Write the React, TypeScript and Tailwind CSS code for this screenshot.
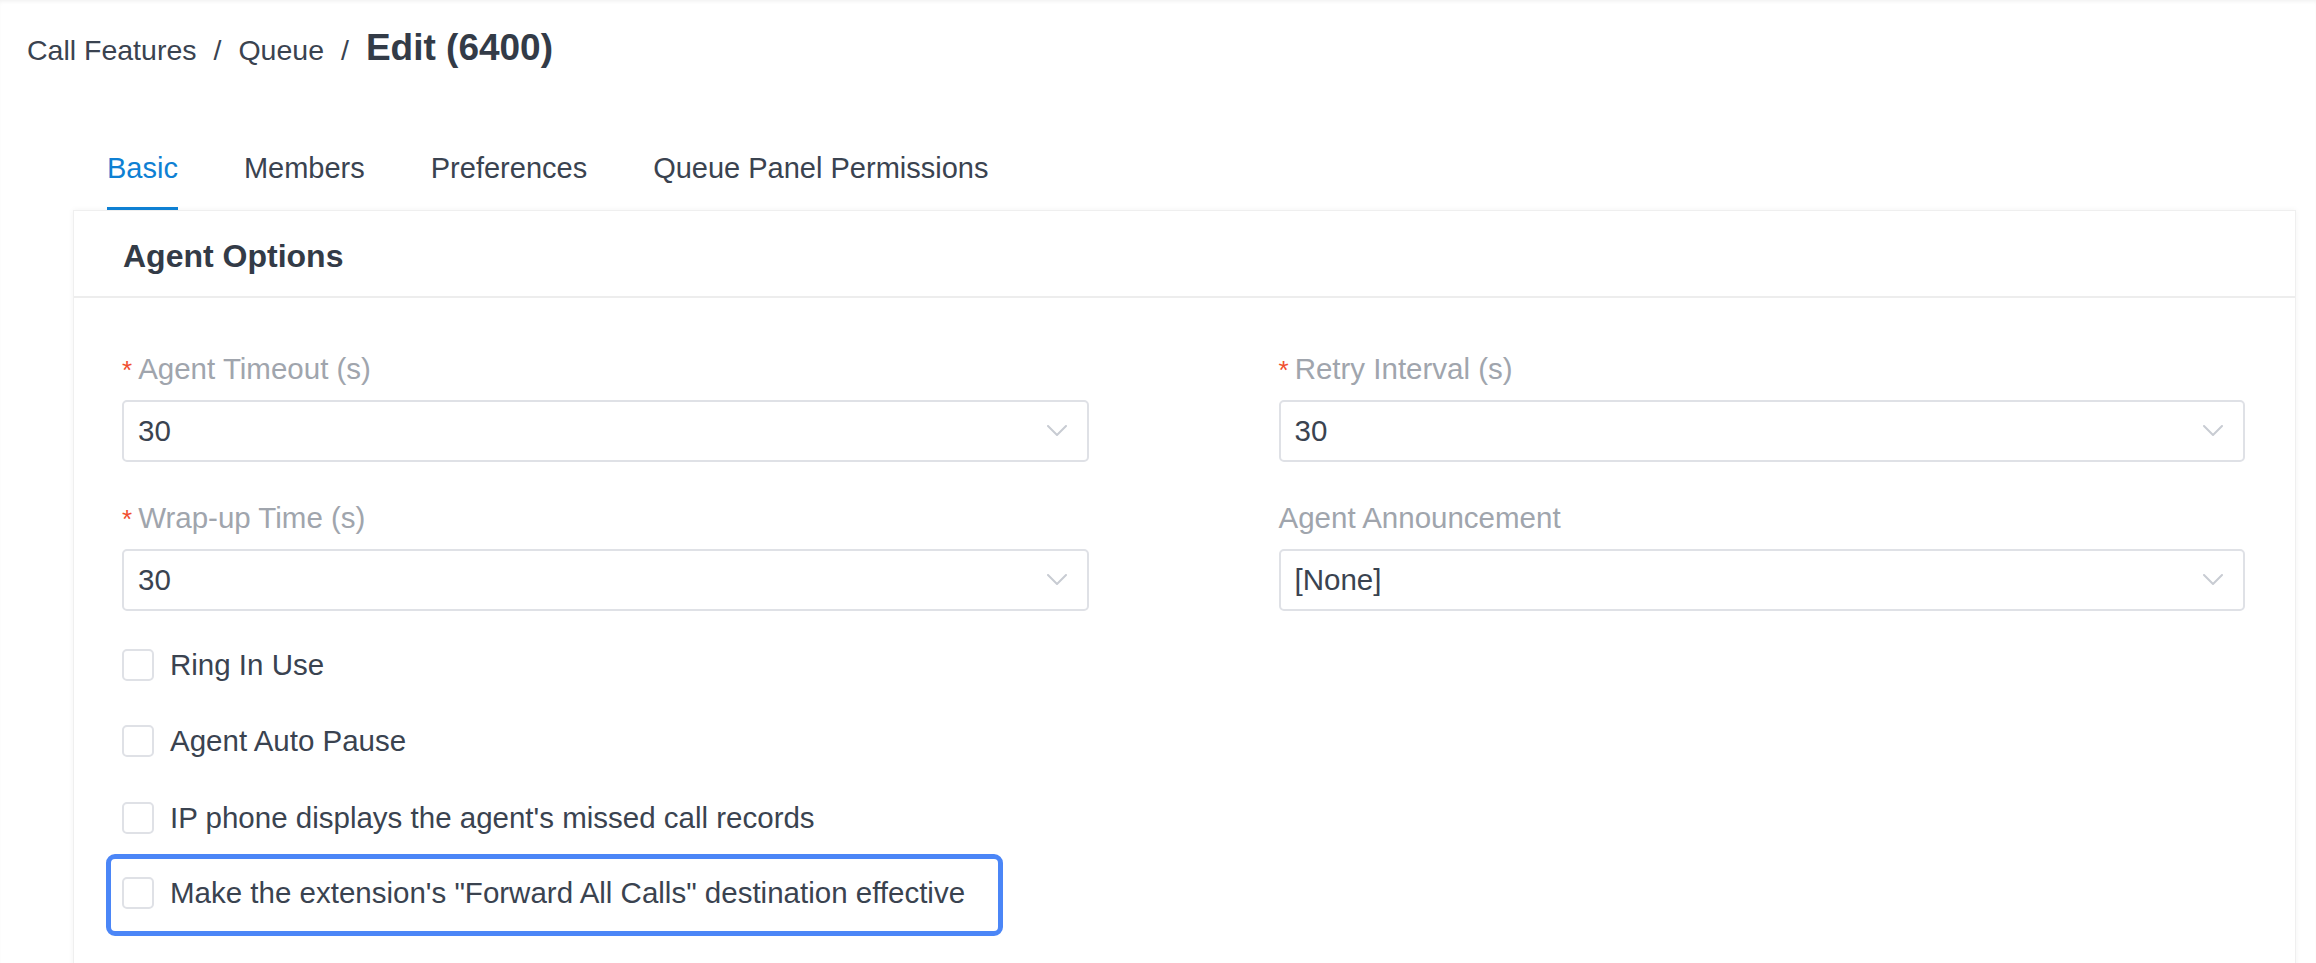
import React from 'react';

const tabs = ['Basic', 'Members', 'Preferences', 'Queue Panel Permissions'];

function Chevron() {
  return (
    <svg width="20" height="12" viewBox="0 0 20 12" fill="none">
      <polyline points="1,1 10,10 19,1" stroke="#c8ccd3" strokeWidth="2" strokeLinecap="round" strokeLinejoin="round" />
    </svg>
  );
}

function SelectField({ label, value, required }: { label: string; value: string; required?: boolean }) {
  return (
    <div className="flex flex-col">
      <div className="flex items-baseline leading-none text-[29.5px] text-[#a0a5ad]">
        {required && <span className="text-[#f04e2f] mr-[6px] text-[26px]">*</span>}
        <span>{label}</span>
      </div>
      <div className="mt-[16.5px] h-[62px] border-2 border-[#dfe1e6] rounded-[5px] flex items-center justify-between pl-[14px] pr-[20px] bg-white">
        <span className="leading-none text-[29.5px] text-[#3a4350]">{value}</span>
        <Chevron />
      </div>
    </div>
  );
}

function CheckRow({ label }: { label: string }) {
  return (
    <div className="flex items-center">
      <div className="w-[32px] h-[32px] border-2 border-[#dfe1e6] rounded-[5px] bg-white" />
      <span className="ml-[16px] leading-none text-[29.5px] text-[#3a4350]">{label}</span>
    </div>
  );
}

export default function App() {
  return (
    <div className="min-h-screen bg-white font-['Liberation_Sans',Arial,sans-serif] shadow-[inset_0_3px_4px_-2px_rgba(0,0,0,0.07)]">
      {/* breadcrumb */}
      <div className="pt-[29px] pl-[27px] flex items-baseline leading-none text-[#3a4350]">
        <span className="text-[28.5px]">Call Features</span>
        <span className="text-[28.5px] px-[17px]">/</span>
        <span className="text-[28.5px]">Queue</span>
        <span className="text-[28.5px] px-[17px]">/</span>
        <span className="text-[37px] font-bold text-[#333b47]">Edit (6400)</span>
      </div>

      {/* tabs */}
      <div className="mt-[88px] pl-[107px] flex gap-[66px]">
        {tabs.map((t, i) => (
          <div
            key={t}
            className={
              i === 0
                ? 'leading-none text-[29px] pb-[24px] border-b-[3px] border-[#0e80d3] text-[#0e80d3]'
                : 'leading-none text-[29px] pb-[24px] border-b-[3px] border-transparent text-[#3a4350]'
            }
          >
            {t}
          </div>
        ))}
      </div>

      {/* card */}
      <div className="ml-[73px] w-[2223px] border border-[#efefef] bg-white shadow-[0_0_6px_rgba(0,0,0,0.05)]">
        <div className="pt-[29px] pb-[24px] pl-[49px] border-b-2 border-[#ededed]">
          <h2 className="leading-none text-[32px] font-bold text-[#333b47]">Agent Options</h2>
        </div>

        <div className="pt-[56px] pl-[48px] pr-[50px] pb-[40px]">
          <div className="grid grid-cols-2 gap-x-[190px] gap-y-[41px]">
            <SelectField label="Agent Timeout (s)" value="30" required />
            <SelectField label="Retry Interval (s)" value="30" required />
            <SelectField label="Wrap-up Time (s)" value="30" required />
            <SelectField label="Agent Announcement" value="[None]" />
          </div>

          <div className="flex flex-col">
            <div className="mt-[38px]">
              <CheckRow label="Ring In Use" />
            </div>
            <div className="mt-[44px]">
              <CheckRow label="Agent Auto Pause" />
            </div>
            <div className="mt-[45px]">
              <CheckRow label="IP phone displays the agent's missed call records" />
            </div>
            <div className="mt-[20px] -ml-[16px] w-[897px] border-[5px] border-[#4b86f7] rounded-[9px] pt-[18px] pb-[22px] pl-[11px]">
              <CheckRow label={'Make the extension\'s "Forward All Calls" destination effective'} />
            </div>
          </div>
        </div>
      </div>
    </div>
  );
}
